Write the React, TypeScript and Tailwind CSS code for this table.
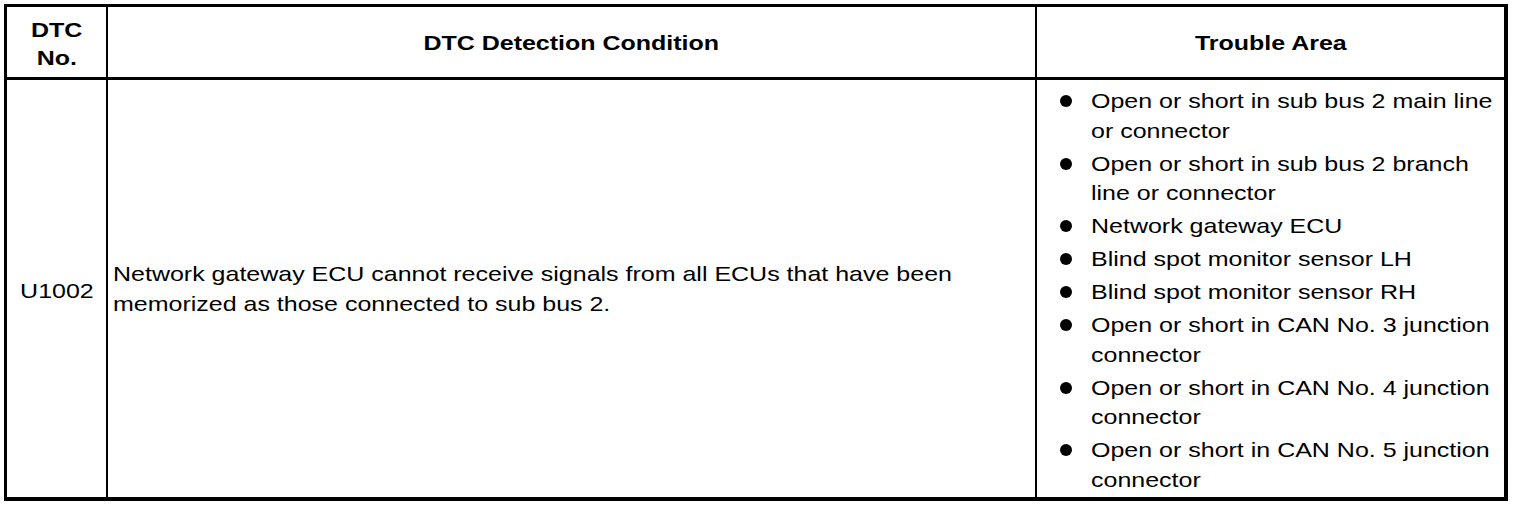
// DTC table: U1002
const troubleAreas: string[][] = [
  ["Open or short in sub bus 2 main line", "or connector"],
  ["Open or short in sub bus 2 branch", "line or connector"],
  ["Network gateway ECU"],
  ["Blind spot monitor sensor LH"],
  ["Blind spot monitor sensor RH"],
  ["Open or short in CAN No. 3 junction", "connector"],
  ["Open or short in CAN No. 4 junction", "connector"],
  ["Open or short in CAN No. 5 junction", "connector"],
];

// the source print is horizontally stretched, so widen the glyphs a bit
function Wide({ children, center }: { children: React.ReactNode; center?: boolean }) {
  return (
    <span className={`inline-block whitespace-nowrap scale-x-[1.19] ${center ? "origin-center" : "origin-left"}`}>
      {children}
    </span>
  );
}

export default function App() {
  return (
    <div className="min-h-screen bg-white p-[4px] font-['Liberation_Sans',Arial,sans-serif] text-[21px] text-black">
      <div className="grid w-[1504px] h-[497px] grid-cols-[101px_929px_467px] grid-rows-[73px_417px] border-l-[3px] border-t-[3px] border-r-4 border-b-4 border-black">
        {/* Header */}
        <div className="flex flex-col items-center justify-center border-r-2 border-b-[3px] border-black pt-[3px] font-bold leading-[28px]">
          <Wide center>DTC</Wide>
          <Wide center>No.</Wide>
        </div>
        <div className="flex items-center justify-center border-r-2 border-b-[3px] border-black pt-[1px] font-bold">
          <Wide center>DTC Detection Condition</Wide>
        </div>
        <div className="flex items-center justify-center border-b-[3px] border-black pt-[1px] font-bold">
          <Wide center>Trouble Area</Wide>
        </div>

        {/* Body */}
        <div className="flex items-center justify-center border-r-2 border-black pt-[5px]">
          <Wide center>U1002</Wide>
        </div>
        <div className="flex flex-col justify-center border-r-2 border-black pl-[5px] pt-[1px] leading-[30px]">
          <Wide>Network gateway ECU cannot receive signals from all ECUs that have been</Wide>
          <Wide>memorized as those connected to sub bus 2.</Wide>
        </div>
        <ul className="flex flex-col gap-[3.5px] pl-[23px] pt-[6px] leading-[29.5px]">
          {troubleAreas.map((lines) => (
            <li key={lines[0]} className="flex">
              <div className="w-[31px] shrink-0 pt-[9px]">
                <div className="h-[12px] w-[12px] rounded-full bg-black" />
              </div>
              <div className="flex flex-col">
                {lines.map((l) => (
                  <Wide key={l}>{l}</Wide>
                ))}
              </div>
            </li>
          ))}
        </ul>
      </div>
    </div>
  );
}
